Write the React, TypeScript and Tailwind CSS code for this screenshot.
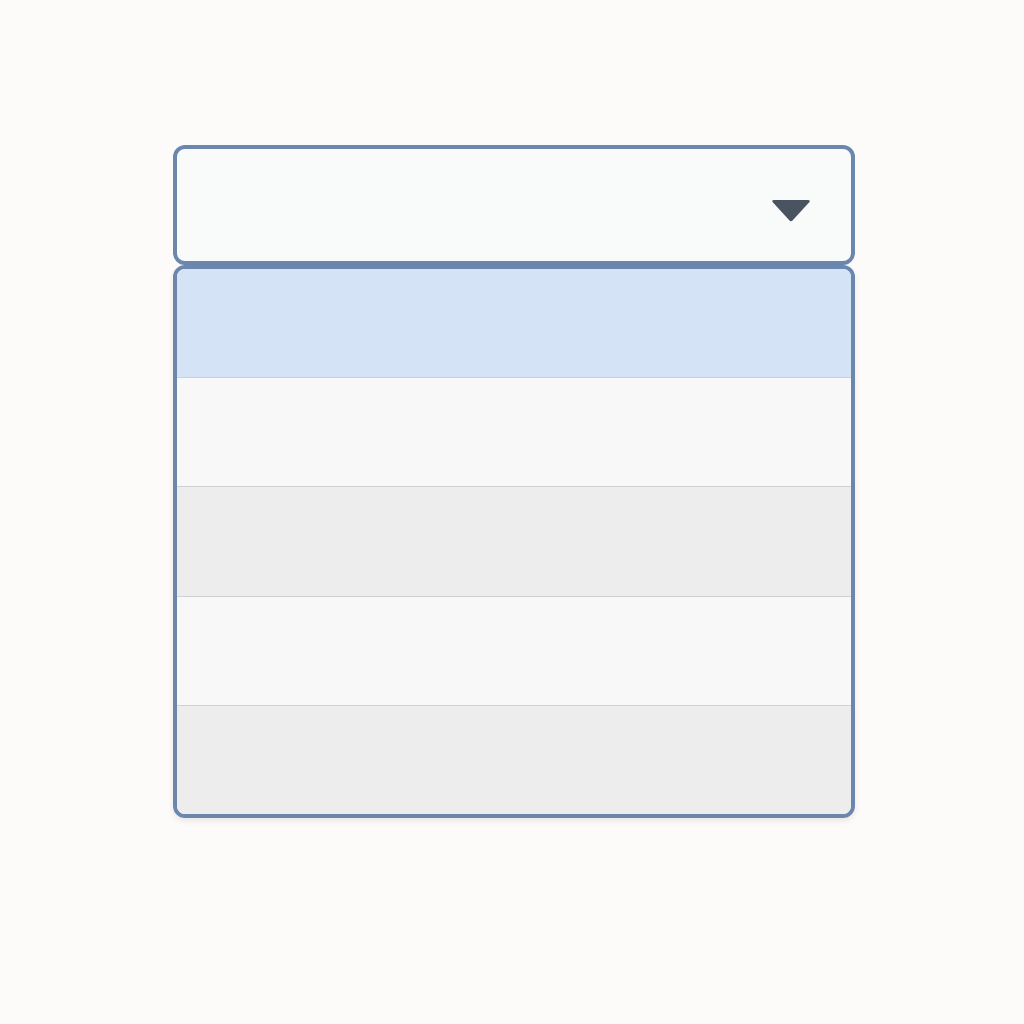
const rows = [
  { bg: 'bg-[#d5e3f7]' },
  { bg: 'bg-[#f8f8f8]' },
  { bg: 'bg-[#eeeded]' },
  { bg: 'bg-[#f8f8f8]' },
  { bg: 'bg-[#eeeded]' },
]

export default function App() {
  return (
    <div className="min-h-[1024px] w-full bg-[#fcfbfa] flex flex-col items-center pt-[145px] pl-[4px]" style={{ fontFamily: '"Liberation Sans", Arial, sans-serif' }}>
      {/* closed select header */}
      <button
        type="button"
        className="w-[682px] h-[120px] bg-[#f9fafa] border-4 border-[#6b87ad] rounded-[12px] flex items-center justify-end pr-[40px]"
      >
        <svg width="40" height="24" viewBox="0 0 40 24" className="mt-[11px]">
          <path d="M3 1 H37 Q40 1 38 3.5 L21.5 21.5 Q20 23 18.5 21.5 L2 3.5 Q0 1 3 1 Z" fill="#4a5461" />
        </svg>
      </button>

      {/* open option list */}
      <div className="w-[682px] h-[553px] border-4 border-[#6b87ad] rounded-[12px] overflow-hidden flex flex-col shadow-[0_3px_6px_rgba(0,0,0,0.08)]">
        {rows.map((r, i) => (
          <div
            key={i}
            className={`flex-1 ${r.bg} ${i > 0 ? 'border-t border-[#d0d1d4]' : ''}`}
          />
        ))}
      </div>
    </div>
  )
}
